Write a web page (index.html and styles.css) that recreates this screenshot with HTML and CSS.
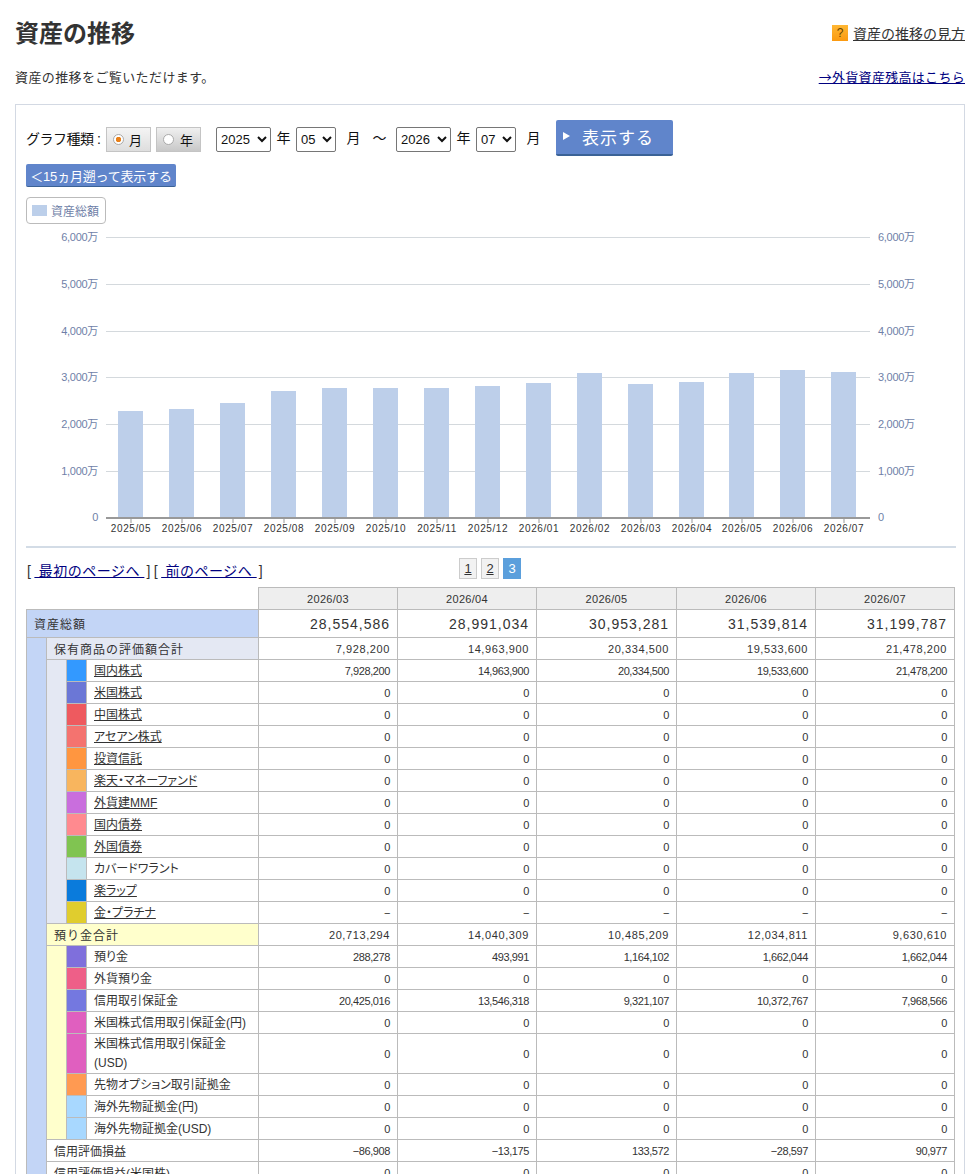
FILE: index.html
```html
<!DOCTYPE html>
<html lang="ja">
  <head>
    <meta charset="utf-8" />
    <title>資産の推移</title>
    <link rel="stylesheet" href="styles.css">
  </head>
  <body>
    <div class="page">
      <div class="title-row">
        <h1>資産の推移</h1>
        <a class="help" href="#"><span class="help-icon">?</span><span class="help-text">資産の推移の見方</span></a>
      </div>
      <div class="lead-row">
        <p>資産の推移をご覧いただけます。</p>
        <a class="link foreign" href="#">→外貨資産残高はこちら</a>
      </div>

      <div class="panel">
        <form class="controls">
          <span class="ctl-label">グラフ種類 :</span>
          <span class="radio-btn on"><i class="radio"></i>月</span>
          <span class="radio-btn gray"><i class="radio"></i>年</span>
          <select class="sel sel-year first"><option>2025</option></select>
          <span class="unit">年</span>
          <select class="sel sel-month"><option>05</option></select>
          <span class="unit wide">月</span>
          <span class="unit tilde">～</span>
          <select class="sel sel-year"><option>2026</option></select>
          <span class="unit">年</span>
          <select class="sel sel-month"><option>07</option></select>
          <span class="unit wide">月</span>
          <button type="button" class="show-btn"><i class="tri"></i>表示する</button>
        </form>
        <button type="button" class="back-btn">＜15ヵ月遡って表示する</button>
        <div class="legend"><i></i>資産総額</div>

        <svg class="chart" width="948" height="320" viewBox="15 225 948 320">
          <g class="grid">
            <line x1="106" x2="870" y1="237.5" y2="237.5"/>
            <line x1="106" x2="870" y1="284.5" y2="284.5"/>
            <line x1="106" x2="870" y1="331.5" y2="331.5"/>
            <line x1="106" x2="870" y1="377.5" y2="377.5"/>
            <line x1="106" x2="870" y1="424.5" y2="424.5"/>
            <line x1="106" x2="870" y1="471.5" y2="471.5"/>
          </g>
          <g class="bars">
            <rect x="118" y="411" width="25" height="106"/>
            <rect x="169" y="409" width="25" height="108"/>
            <rect x="220" y="403" width="25" height="114"/>
            <rect x="271" y="391" width="25" height="126"/>
            <rect x="322" y="388" width="25" height="129"/>
            <rect x="373" y="388" width="25" height="129"/>
            <rect x="424" y="388" width="25" height="129"/>
            <rect x="475" y="386" width="25" height="131"/>
            <rect x="526" y="383" width="25" height="134"/>
            <rect x="577" y="373" width="25" height="144"/>
            <rect x="628" y="384" width="25" height="133"/>
            <rect x="679" y="382" width="25" height="135"/>
            <rect x="729" y="373" width="25" height="144"/>
            <rect x="780" y="370" width="25" height="147"/>
            <rect x="831" y="372" width="25" height="145"/>
          </g>
          <line class="axis" x1="106" x2="870" y1="518" y2="518"/>
          <g class="ticks">
            <line x1="131" x2="131" y1="519" y2="523"/><line x1="182" x2="182" y1="519" y2="523"/>
            <line x1="233" x2="233" y1="519" y2="523"/><line x1="284" x2="284" y1="519" y2="523"/>
            <line x1="335" x2="335" y1="519" y2="523"/><line x1="386" x2="386" y1="519" y2="523"/>
            <line x1="437" x2="437" y1="519" y2="523"/><line x1="488" x2="488" y1="519" y2="523"/>
            <line x1="539" x2="539" y1="519" y2="523"/><line x1="590" x2="590" y1="519" y2="523"/>
            <line x1="641" x2="641" y1="519" y2="523"/><line x1="692" x2="692" y1="519" y2="523"/>
            <line x1="742" x2="742" y1="519" y2="523"/><line x1="793" x2="793" y1="519" y2="523"/>
            <line x1="844" x2="844" y1="519" y2="523"/>
          </g>
          <g class="y-left">
            <text x="98" y="241">6,000万</text><text x="98" y="288">5,000万</text>
            <text x="98" y="335">4,000万</text><text x="98" y="381">3,000万</text>
            <text x="98" y="428">2,000万</text><text x="98" y="475">1,000万</text>
            <text x="98" y="521">0</text>
          </g>
          <g class="y-right">
            <text x="878" y="241">6,000万</text><text x="878" y="288">5,000万</text>
            <text x="878" y="335">4,000万</text><text x="878" y="381">3,000万</text>
            <text x="878" y="428">2,000万</text><text x="878" y="475">1,000万</text>
            <text x="878" y="521">0</text>
          </g>
          <g class="x-labels">
            <text x="131" y="532">2025/05</text><text x="182" y="532">2025/06</text>
            <text x="233" y="532">2025/07</text><text x="284" y="532">2025/08</text>
            <text x="335" y="532">2025/09</text><text x="386" y="532">2025/10</text>
            <text x="437" y="532">2025/11</text><text x="488" y="532">2025/12</text>
            <text x="539" y="532">2026/01</text><text x="590" y="532">2026/02</text>
            <text x="641" y="532">2026/03</text><text x="692" y="532">2026/04</text>
            <text x="742" y="532">2026/05</text><text x="793" y="532">2026/06</text>
            <text x="844" y="532">2026/07</text>
          </g>
        </svg>

        <div class="rule"></div>

        <div class="pager-row">
          <div class="page-links">[<a class="link" href="#"> 最初のページへ </a>]<span class="gap"></span>[<a class="link" href="#"> 前のページへ </a>]</div>
          <div class="pager">
            <a href="#">1</a><a href="#">2</a><b>3</b>
          </div>
        </div>

        <table class="assets">
          <colgroup>
            <col class="c-band"><col class="c-band2"><col class="c-swatch"><col class="c-label">
            <col class="c-num"><col class="c-num"><col class="c-num-wide"><col class="c-num"><col class="c-num">
          </colgroup>
          <tr class="head">
            <td class="blank" colspan="4"></td>
            <th>2026/03</th><th>2026/04</th><th>2026/05</th><th>2026/06</th><th>2026/07</th>
          </tr>
          <tr class="total">
            <td class="name blue" colspan="4">資産総額</td>
            <td>28,554,586</td><td>28,991,034</td><td>30,953,281</td><td>31,539,814</td><td>31,199,787</td>
          </tr>
          <tr class="sub">
            <td class="blue" rowspan="24"></td>
            <td class="name slate" colspan="3">保有商品の評価額合計</td>
            <td>7,928,200</td><td>14,963,900</td><td>20,334,500</td><td>19,533,600</td><td>21,478,200</td>
          </tr>
          <tr>
            <td class="slate" rowspan="12"></td>
            <td class="s1"></td><td class="label"><a href="#">国内株式</a></td>
            <td>7,928,200</td><td>14,963,900</td><td>20,334,500</td><td>19,533,600</td><td>21,478,200</td>
          </tr>
          <tr><td class="s2"></td><td class="label"><a href="#">米国株式</a></td><td>0</td><td>0</td><td>0</td><td>0</td><td>0</td></tr>
          <tr><td class="s3"></td><td class="label"><a href="#">中国株式</a></td><td>0</td><td>0</td><td>0</td><td>0</td><td>0</td></tr>
          <tr><td class="s4"></td><td class="label"><a href="#">アセアン株式</a></td><td>0</td><td>0</td><td>0</td><td>0</td><td>0</td></tr>
          <tr><td class="s5"></td><td class="label"><a href="#">投資信託</a></td><td>0</td><td>0</td><td>0</td><td>0</td><td>0</td></tr>
          <tr><td class="s6"></td><td class="label"><a href="#">楽天・マネーファンド</a></td><td>0</td><td>0</td><td>0</td><td>0</td><td>0</td></tr>
          <tr><td class="s7"></td><td class="label"><a href="#">外貨建MMF</a></td><td>0</td><td>0</td><td>0</td><td>0</td><td>0</td></tr>
          <tr><td class="s8"></td><td class="label"><a href="#">国内債券</a></td><td>0</td><td>0</td><td>0</td><td>0</td><td>0</td></tr>
          <tr><td class="s9"></td><td class="label"><a href="#">外国債券</a></td><td>0</td><td>0</td><td>0</td><td>0</td><td>0</td></tr>
          <tr><td class="s10"></td><td class="label">カバードワラント</td><td>0</td><td>0</td><td>0</td><td>0</td><td>0</td></tr>
          <tr><td class="s11"></td><td class="label"><a href="#">楽ラップ</a></td><td>0</td><td>0</td><td>0</td><td>0</td><td>0</td></tr>
          <tr><td class="s12"></td><td class="label"><a href="#">金・プラチナ</a></td><td>−</td><td>−</td><td>−</td><td>−</td><td>−</td></tr>
          <tr class="sub">
            <td class="name cream" colspan="3">預り金合計</td>
            <td>20,713,294</td><td>14,040,309</td><td>10,485,209</td><td>12,034,811</td><td>9,630,610</td>
          </tr>
          <tr>
            <td class="cream" rowspan="8"></td>
            <td class="s13"></td><td class="label">預り金</td>
            <td>288,278</td><td>493,991</td><td>1,164,102</td><td>1,662,044</td><td>1,662,044</td>
          </tr>
          <tr><td class="s14"></td><td class="label">外貨預り金</td><td>0</td><td>0</td><td>0</td><td>0</td><td>0</td></tr>
          <tr><td class="s15"></td><td class="label">信用取引保証金</td><td>20,425,016</td><td>13,546,318</td><td>9,321,107</td><td>10,372,767</td><td>7,968,566</td></tr>
          <tr><td class="s16"></td><td class="label">米国株式信用取引保証金(円)</td><td>0</td><td>0</td><td>0</td><td>0</td><td>0</td></tr>
          <tr class="tall"><td class="s16"></td><td class="label">米国株式信用取引保証金<br>(USD)</td><td>0</td><td>0</td><td>0</td><td>0</td><td>0</td></tr>
          <tr><td class="s17"></td><td class="label">先物オプション取引証拠金</td><td>0</td><td>0</td><td>0</td><td>0</td><td>0</td></tr>
          <tr><td class="s18"></td><td class="label">海外先物証拠金(円)</td><td>0</td><td>0</td><td>0</td><td>0</td><td>0</td></tr>
          <tr><td class="s18"></td><td class="label">海外先物証拠金(USD)</td><td>0</td><td>0</td><td>0</td><td>0</td><td>0</td></tr>
          <tr>
            <td class="name plain" colspan="3">信用評価損益</td>
            <td>−86,908</td><td>−13,175</td><td>133,572</td><td>−28,597</td><td>90,977</td>
          </tr>
          <tr>
            <td class="name plain" colspan="3">信用評価損益(米国株)</td>
            <td>0</td><td>0</td><td>0</td><td>0</td><td>0</td>
          </tr>
        </table>
      </div>
    </div>
  </body>
</html>
```

FILE: styles.css
```css
html, body {
  margin: 0;
  height: 1174px;
  overflow: hidden;
  background: #fff;
}
body {
  font-family: "Liberation Sans", "Noto Sans CJK JP", sans-serif;
  font-size: 12px;
  font-feature-settings: "palt";
  color: #333;
}
.page {
  padding: 0 9px 0 15px;
}
a {
  color: inherit;
}
.link {
  color: #000080;
}

.title-row {
  display: flex;
  justify-content: space-between;
  align-items: center;
  height: 66px;
}
h1 {
  margin: 1px 0 0;
  font-size: 24px;
  font-weight: bold;
  color: #333;
  line-height: 66px;
  font-feature-settings: normal;
}
.help {
  display: flex;
  align-items: center;
  gap: 5px;
  font-size: 14px;
  color: #333;
  text-decoration: none;
  font-feature-settings: normal;
}
.help-text {
  text-decoration: underline;
}
.help-icon {
  width: 16px;
  height: 16px;
  background: linear-gradient(#ffb733, #fb9a10);
  color: #664400;
  font-size: 12px;
  line-height: 16px;
  text-align: center;
}
.lead-row {
  display: flex;
  justify-content: space-between;
  align-items: center;
  height: 22px;
  font-size: 13px;
  font-feature-settings: normal;
}
.lead-row p {
  margin: -1px 0 0;
  letter-spacing: 0.4px;
}
.foreign {
  font-family: "Noto Sans CJK JP", sans-serif;
  letter-spacing: 0.3px;
  line-height: 16px;
}
.panel {
  margin-top: 16px;
  border: 1px solid #d3d9e3;
  border-bottom: 0;
  padding: 15px 10px 0;
  height: 1100px;
}

/* form */
.controls {
  display: flex;
  align-items: flex-start;
  height: 44px;
  font-size: 14px;
  color: #111;
}
.ctl-label {
  margin-top: 8px;
  width: 80px;
  letter-spacing: -0.5px;
  font-feature-settings: normal;
}
.radio-btn {
  display: flex;
  align-items: center;
  box-sizing: border-box;
  width: 45px;
  height: 25px;
  margin: 7px 5px 0 0;
  padding: 1px 0 0 6px;
  border: 1px solid #c4c4c4;
  background: linear-gradient(#f4f4f4, #dedede);
  font-size: 13px;
  line-height: 21px;
}
.radio-btn.gray {
  background: linear-gradient(#f0f0f0, #c8c8c8);
}
.radio {
  box-sizing: border-box;
  width: 11px;
  height: 11px;
  margin: -1px 5px 0 0;
  border: 1px solid #aaa;
  border-radius: 50%;
  background: #fff;
}
.radio-btn.gray .radio {
  margin-right: 6px;
}
.radio-btn.on .radio {
  background: radial-gradient(circle, #e8801a 0 2.5px, #fff 3px);
}
.sel {
  box-sizing: border-box;
  height: 25px;
  margin-top: 7px;
  padding: 0;
  border: 1px solid #767676;
  border-radius: 2px;
  background: #fff;
  font-family: "Liberation Sans", sans-serif;
  font-size: 13px;
  color: #111;
}
.sel-year {
  width: 55px;
}
.sel-month {
  width: 40px;
}
.sel.first {
  margin-left: 10px;
}
.unit {
  width: 25px;
  margin-top: 7px;
  text-align: center;
  font-feature-settings: normal;
}
.unit.wide {
  width: 37px;
  text-align: center;
  margin-left: -1px;
  margin-right: 1px;
}
.unit.tilde {
  width: 19px;
  margin-right: 5px;
  margin-left: -3px;
  padding-right: 2px;
}
.show-btn {
  display: flex;
  align-items: center;
  width: 117px;
  height: 36px;
  margin-left: 3px;
  padding: 0 0 2px 7px;
  border: 0;
  border-bottom: 2px solid #3b6296;
  border-radius: 2px;
  background: #6085cb;
  color: #fff;
  font-family: inherit;
  font-size: 17px;
  letter-spacing: 1px;
  font-feature-settings: normal;
}
.tri {
  width: 0;
  height: 0;
  margin-right: 12px;
  border-left: 7px solid #fff;
  border-top: 4px solid transparent;
  border-bottom: 4px solid transparent;
}
.back-btn {
  display: block;
  box-sizing: border-box;
  width: 150px;
  height: 23px;
  margin: 0;
  padding: 0;
  border: 0;
  border-bottom: 1px solid #3b6296;
  border-radius: 2px;
  background: #6085cb;
  color: #fff;
  font-family: inherit;
  font-size: 13px;
  letter-spacing: -0.2px;
  white-space: nowrap;
  font-feature-settings: normal;
}
.legend {
  display: flex;
  align-items: center;
  box-sizing: border-box;
  width: 80px;
  height: 27px;
  margin-top: 10px;
  padding-left: 5px;
  border: 1px solid #bbb;
  border-radius: 4px;
  font-size: 12px;
  color: #6f7fa8;
  font-feature-settings: normal;
}
.legend i {
  width: 15px;
  height: 11px;
  margin-right: 4px;
  background: #bccfea;
}

/* chart */
.chart {
  display: block;
  margin: 1px 0 0 -11px;
}
.grid line {
  stroke: #d4d9dd;
}
.bars rect {
  fill: #bdcfea;
}
.axis {
  stroke: #999;
  stroke-width: 2;
}
.ticks line {
  stroke: #999;
}
.y-left text,
.y-right text {
  font-size: 11px;
  fill: #6f7fa8;
  letter-spacing: -0.3px;
}
.y-left text {
  text-anchor: end;
}
.x-labels text {
  font-size: 10px;
  fill: #333;
  text-anchor: middle;
  letter-spacing: 0.6px;
}
.rule {
  height: 2px;
  margin-top: 1px;
  margin-right: -2px;
  background: #d3dce6;
}
.pager-row {
  display: flex;
  height: 39px;
}
.page-links {
  width: 432px;
  padding: 14px 0 0 1px;
  font-size: 14px;
  letter-spacing: 0.5px;
  color: #333;
  line-height: 18px;
  white-space: pre;
  font-feature-settings: normal;
}
.page-links a {
  margin: 0 2px 0 3px;
}
.gap {
  display: inline-block;
  width: 3px;
}
.pager {
  display: flex;
  gap: 4px;
  padding-top: 10px;
}
.pager a,
.pager b {
  box-sizing: border-box;
  width: 18px;
  height: 21px;
  border: 1px solid #ccc;
  background: #f2f2f2;
  color: #333;
  font-size: 13px;
  font-weight: normal;
  line-height: 19px;
  text-align: center;
}
.pager b {
  border-color: #5b9fdc;
  background: #5b9fdc;
  color: #fff;
}

/* table */
.assets {
  border-collapse: collapse;
  table-layout: fixed;
  width: 928px;
  margin-top: 0;
  font-size: 11px;
  letter-spacing: -0.4px;
  color: #333;
}
.c-band, .c-band2, .c-swatch {
  width: 20px;
}
.c-label {
  width: 172px;
}
.c-num {
  width: 139px;
}
.c-num-wide {
  width: 140px;
}
.assets th,
.assets td {
  padding: 0 7px 0 0;
  border: 1px solid #bbb;
  text-align: right;
  font-weight: normal;
  white-space: nowrap;
}
.assets tr {
  height: 22px;
}
.assets tr.total {
  height: 28px;
}
.assets tr.tall {
  height: 40px;
}
.assets th {
  padding: 0;
  background: #eee;
  font-size: 11px;
  text-align: center;
  letter-spacing: 0.3px;
}
.assets td.blank {
  border-top: 0;
  border-left: 0;
}
.assets .total td {
  font-size: 14px;
  letter-spacing: 1px;
}
.assets .sub td {
  letter-spacing: 0.6px;
}
.assets td.name {
  padding-left: 7px;
  text-align: left;
  letter-spacing: 1px;
  font-size: 12px;
  font-feature-settings: normal;
}
.assets td.name.plain {
  letter-spacing: 0;
}
.assets td.label {
  padding: 1px 0 0 7px;
  text-align: left;
  font-size: 12px;
  letter-spacing: 0;
  line-height: 19px;
}
.blue {
  background: #c3d5f6;
}
.slate {
  background: #e4e8f3;
}
.cream {
  background: #ffffcc;
}
.s1 { background: #3399ff; }
.s2 { background: #6b77d6; }
.s3 { background: #ee5a5f; }
.s4 { background: #f4736f; }
.s5 { background: #ff9640; }
.s6 { background: #f8b55e; }
.s7 { background: #c96edd; }
.s8 { background: #ff8a8f; }
.s9 { background: #80c451; }
.s10 { background: #c5e4ee; }
.s11 { background: #0a7bdc; }
.s12 { background: #e0cd2e; }
.s13 { background: #7f6fdc; }
.s14 { background: #ee5f88; }
.s15 { background: #7478e0; }
.s16 { background: #e05fbf; }
.s17 { background: #ff9a52; }
.s18 { background: #a8d8ff; }
```
